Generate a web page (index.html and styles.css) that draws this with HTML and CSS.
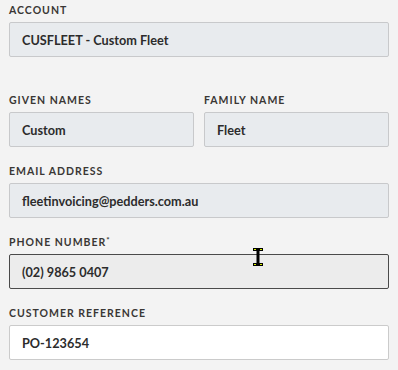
FILE: index.html
```html
<!DOCTYPE html>
<html lang="en">
<head>
    <meta charset="UTF-8">
    <meta name="viewport" content="width=device-width, initial-scale=1.0">
    <title>Customer details</title>
    <link rel="stylesheet" href="styles.css">
</head>
<body>
    <form class="details">
        <div class="field account">
            <label>Account</label>
            <div class="input readonly">CUSFLEET - Custom Fleet</div>
        </div>

        <div class="row">
            <div class="field">
                <label>Given Names</label>
                <div class="input readonly">Custom</div>
            </div>
            <div class="field">
                <label>Family Name</label>
                <div class="input readonly">Fleet</div>
            </div>
        </div>

        <div class="field">
            <label>Email Address</label>
            <div class="input readonly">fleetinvoicing@pedders.com.au</div>
        </div>

        <div class="field">
            <label>Phone Number<sup>*</sup></label>
            <div class="input active">(02) 9865 0407
                <svg class="cursor" width="12" height="20" viewBox="0 0 12 20">
                    <path d="M1 1h10v3H7.5v12H11v3H1v-3h3.5V4H1z" fill="#000"/>
                    <rect x="2" y="2" width="2" height="1" fill="#d4f000"/>
                    <rect x="8" y="2" width="2" height="1" fill="#d4f000"/>
                    <rect x="2" y="17" width="2" height="1" fill="#d4f000"/>
                    <rect x="8" y="17" width="2" height="1" fill="#d4f000"/>
                </svg>
            </div>
        </div>

        <div class="field">
            <label>Customer Reference</label>
            <div class="input">PO-123654</div>
        </div>
    </form>
</body>
</html>
```

FILE: styles.css
```css
body {
    margin: 0;
    background: #f3f3f3;
    font-family: Lato, "Open Sans", sans-serif;
    color: #333;
}
.details {
    padding: 6px 9px 0;
    display: flex;
    flex-direction: column;
    gap: 20px;
}
.account {
    margin-bottom: 19px;
}
.row {
    display: grid;
    grid-template-columns: 1fr 1fr;
    gap: 10px;
}
.field label {
    display: block;
    font-size: 10.5px;
    font-weight: 700;
    letter-spacing: 1px;
    text-transform: uppercase;
    color: #3a3735;
    line-height: 12px;
    margin: -2px 0 6px;
}
.field label sup {
    font-size: 8px;
    vertical-align: top;
    line-height: 8px;
}
.input {
    position: relative;
    box-sizing: border-box;
    height: 35px;
    padding: 0 12px;
    display: flex;
    align-items: center;
    font-size: 12.7px;
    font-weight: 700;
    color: #2c2c2c;
    background: #fff;
    border: 1px solid #cbcbcb;
    border-radius: 2px;
}
.input.readonly {
    background: #e8ebee;
    border-color: #c8c9cb;
}
.input.active {
    background: #ececec;
    border-color: #4a4a4a;
}
.cursor {
    position: absolute;
    left: 242px;
    top: -8px;
}
```
